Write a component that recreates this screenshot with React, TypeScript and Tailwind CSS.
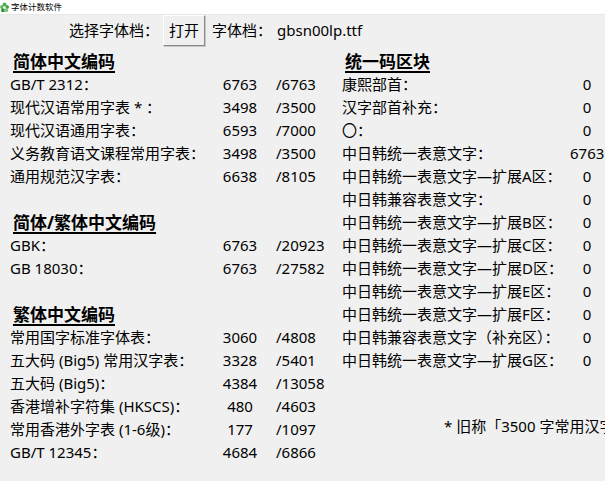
import React from 'react';

type Row = { label: string; count: string; total?: string };

const FONT = { fontFamily: '"Noto Sans", "Noto Sans CJK SC", sans-serif' };

const simplified: Row[] = [
  { label: 'GB/T 2312：', count: '6763', total: '/6763' },
  { label: '现代汉语常用字表 * ：', count: '3498', total: '/3500' },
  { label: '现代汉语通用字表：', count: '6593', total: '/7000' },
  { label: '义务教育语文课程常用字表：', count: '3498', total: '/3500' },
  { label: '通用规范汉字表：', count: '6638', total: '/8105' },
];

const mixed: Row[] = [
  { label: 'GBK：', count: '6763', total: '/20923' },
  { label: 'GB 18030：', count: '6763', total: '/27582' },
];

const traditional: Row[] = [
  { label: '常用国字标准字体表：', count: '3060', total: '/4808' },
  { label: '五大码 (Big5) 常用汉字表：', count: '3328', total: '/5401' },
  { label: '五大码 (Big5)：', count: '4384', total: '/13058' },
  { label: '香港增补字符集 (HKSCS)：', count: '480', total: '/4603' },
  { label: '常用香港外字表 (1-6级)：', count: '177', total: '/1097' },
  { label: 'GB/T 12345：', count: '4684', total: '/6866' },
];

const blocks: Row[] = [
  { label: '康熙部首：', count: '0' },
  { label: '汉字部首补充：', count: '0' },
  { label: '〇：', count: '0' },
  { label: '中日韩统一表意文字：', count: '6763' },
  { label: '中日韩统一表意文字—扩展A区：', count: '0' },
  { label: '中日韩兼容表意文字：', count: '0' },
  { label: '中日韩统一表意文字—扩展B区：', count: '0' },
  { label: '中日韩统一表意文字—扩展C区：', count: '0' },
  { label: '中日韩统一表意文字—扩展D区：', count: '0' },
  { label: '中日韩统一表意文字—扩展E区：', count: '0' },
  { label: '中日韩统一表意文字—扩展F区：', count: '0' },
  { label: '中日韩兼容表意文字（补充区）：', count: '0' },
  { label: '中日韩统一表意文字—扩展G区：', count: '0' },
];

function Heading({ children }: { children: React.ReactNode }) {
  return (
    <div className="h-[23px] leading-[23px] pl-[3px] text-[17px] font-bold underline underline-offset-[3px] decoration-[1.5px]">
      {children}
    </div>
  );
}

function EncodingRow({ row }: { row: Row }) {
  return (
    <div className="flex h-[23px] leading-[23px] whitespace-nowrap">
      <span className="w-[210px] shrink-0">{row.label}</span>
      <span className="w-[40px] shrink-0 text-center">{row.count}</span>
      <span className="ml-[16px]">{row.total}</span>
    </div>
  );
}

function BlockRow({ row }: { row: Row }) {
  return (
    <div className="flex h-[23px] leading-[23px] whitespace-nowrap">
      <span className="w-[228px] shrink-0">{row.label}</span>
      <span className="w-[34px] shrink-0 text-center">{row.count}</span>
    </div>
  );
}

function AppIcon() {
  return (
    <svg width="9" height="11" viewBox="0 0 9 11">
      <circle cx="4.5" cy="2.5" r="2" fill="#4caf50" />
      <circle cx="2" cy="5" r="2" fill="#66bb6a" />
      <circle cx="7" cy="5" r="2" fill="#43a047" />
      <circle cx="3" cy="8.3" r="2" fill="#388e3c" />
      <circle cx="6.3" cy="8.3" r="2" fill="#81c784" />
      <circle cx="4.5" cy="5.6" r="1.3" fill="#e8f5e9" />
    </svg>
  );
}

export default function App() {
  return (
    <div className="w-[605px] h-[481px] overflow-hidden bg-[#f0f0f0] text-[15px] text-black" style={FONT}>
      <div className="h-[15px] bg-white flex items-center gap-[2px] border-b border-[#e6e6e6]">
        <AppIcon />
        <span className="text-[8.5px] leading-none">字体计数软件</span>
      </div>

      <div className="flex h-[35px] items-start pl-[69px]">
        <span className="w-[94px] shrink-0 leading-[31px]">选择字体档：</span>
        <button className="w-[42px] h-[31px] shrink-0 leading-[29px] bg-[#f0f0f0] border border-t-white border-l-white border-r-[#8a8a8a] border-b-[#8a8a8a] shadow-[1px_1px_0_#c8c8c8]">
          打开
        </button>
        <span className="ml-[7px] w-[65px] shrink-0 leading-[31px]">字体档：</span>
        <span className="leading-[31px]">gbsn00lp.ttf</span>
      </div>

      <div className="flex">
        <div className="w-[332px] shrink-0 pl-[10px]">
          <Heading>简体中文编码</Heading>
          {simplified.map((r) => (
            <EncodingRow key={r.label} row={r} />
          ))}
          <div className="h-[23px]" />
          <Heading>简体/繁体中文编码</Heading>
          {mixed.map((r) => (
            <EncodingRow key={r.label} row={r} />
          ))}
          <div className="h-[23px]" />
          <Heading>繁体中文编码</Heading>
          {traditional.map((r) => (
            <EncodingRow key={r.label} row={r} />
          ))}
        </div>

        <div className="pl-[10px] shrink-0">
          <Heading>统一码区块</Heading>
          {blocks.map((r) => (
            <BlockRow key={r.label} row={r} />
          ))}
          <div className="mt-[43px] pl-[102px] h-[23px] leading-[23px] whitespace-nowrap">
            * 旧称「3500 字常用汉字表」
          </div>
        </div>
      </div>
    </div>
  );
}
